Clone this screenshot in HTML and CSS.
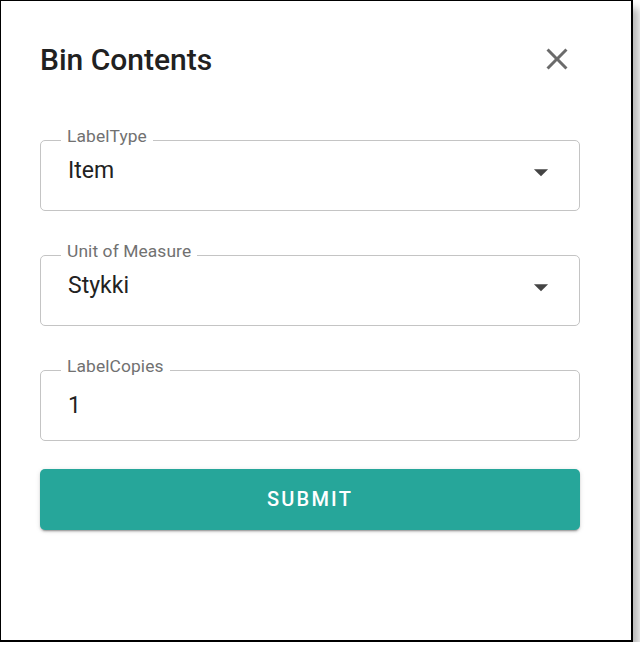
FILE: index.html
```html
<!DOCTYPE html>
<html lang="en">
<head>
<meta charset="utf-8">
<title>Bin Contents</title>
<link rel="stylesheet" href="styles.css">
</head>
<body>
<div class="dialog">
  <header class="dialog-header">
    <h1 class="dialog-title">Bin Contents</h1>
    <button class="close-btn" aria-label="Close">
      <svg viewBox="0 0 24 24" width="36" height="36"><path d="M19 6.41L17.59 5 12 10.59 6.41 5 5 6.41 10.59 12 5 17.59 6.41 19 12 13.41 17.59 19 19 17.59 13.41 12z"/></svg>
    </button>
  </header>
  <form class="dialog-form">
    <div class="field">
      <span class="field-label">LabelType</span>
      <div class="field-row">
        <span class="field-value">Item</span>
        <svg class="arrow" viewBox="0 0 24 24" width="34" height="34"><path d="M7 10l5 5 5-5z"/></svg>
      </div>
    </div>
    <div class="field">
      <span class="field-label">Unit of Measure</span>
      <div class="field-row">
        <span class="field-value">Stykki</span>
        <svg class="arrow" viewBox="0 0 24 24" width="34" height="34"><path d="M7 10l5 5 5-5z"/></svg>
      </div>
    </div>
    <div class="field field-input">
      <span class="field-label">LabelCopies</span>
      <div class="field-row">
        <span class="field-value">1</span>
      </div>
    </div>
    <button type="button" class="submit-btn">SUBMIT</button>
  </form>
</div>
</body>
</html>
```
FILE: styles.css
```css
html, body {
  margin: 0;
  padding: 0;
  background: #ffffff;
}

body {
  font-family: Roboto, "Liberation Sans", Arial, sans-serif;
  color: rgba(0, 0, 0, 0.87);
}

.dialog {
  box-sizing: border-box;
  width: 633px;
  height: 642px;
  border: 1px solid #000;
  border-right-width: 2px;
  border-bottom-width: 2px;
  background: #fff;
  box-shadow: 6px 8px 8px rgba(0, 0, 0, 0.28);
  padding: 40px 51px 0 39px;
}

.dialog-header {
  display: flex;
  align-items: center;
  justify-content: space-between;
  height: 36px;
}

.dialog-title {
  margin: 0;
  font-size: 30px;
  font-weight: 500;
  line-height: 36px;
  color: #212121;
  letter-spacing: 0;
  position: relative;
  top: 1px;
}

.close-btn {
  border: 0;
  padding: 0;
  margin: 0 5px 0 0;
  background: none;
  width: 36px;
  height: 36px;
  display: flex;
  fill: #6b6b6b;
}

.dialog-form {
  display: flex;
  flex-direction: column;
  gap: 44px;
  margin-top: 63px;
}

.field {
  position: relative;
  box-sizing: border-box;
  height: 71px;
  border: 1px solid #c4c4c4;
  border-radius: 5px;
  padding: 17px 21px 0 27px;
}

.field-input {
  padding-top: 22px;
}

.field-label {
  position: absolute;
  left: 20px;
  top: -14px;
  padding: 0 6px;
  background: #fff;
  font-size: 17.4px;
  line-height: 18px;
  color: #717171;
  letter-spacing: 0.1px;
}

.field-row {
  display: flex;
  align-items: center;
  justify-content: space-between;
  height: 26px;
}

.field-value {
  font-size: 23px;
  line-height: 26px;
  color: #222;
}

.arrow {
  fill: #444;
  margin-top: 2px;
}

.submit-btn {
  box-sizing: border-box;
  height: 61px;
  margin-top: -16px;
  border: 0;
  border-radius: 5px;
  background: #26a69a;
  color: #fff;
  font-family: Roboto, "Liberation Sans", Arial, sans-serif;
  font-size: 20px;
  font-weight: 500;
  letter-spacing: 2.2px;
  padding-bottom: 2px;
  box-shadow: 0 3px 1px -2px rgba(0,0,0,0.2), 0 2px 2px 0 rgba(0,0,0,0.14), 0 1px 5px 0 rgba(0,0,0,0.12);
}
```
